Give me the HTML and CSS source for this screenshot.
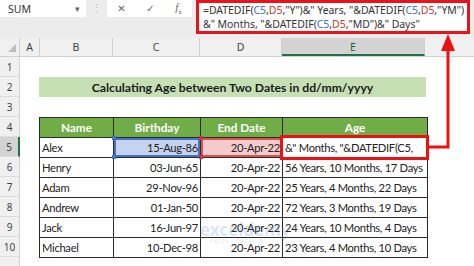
FILE: index.html
```html
<!DOCTYPE html>
<html lang="en">
<head>
    <meta charset="UTF-8">
    <title>DATEDIF Age</title>
    <link rel="stylesheet" href="styles.css">
</head>
<body>

    <div class="formula-bar">
        <div class="name-box"><span>SUM</span><span class="caret">&#9662;</span></div>
        <div class="grip">&#8942;</div>
        <div class="fx-buttons">
            <span class="btn">&#10005;</span>
            <span class="btn">&#10003;</span>
            <span class="btn fx"><i>f</i><sub>x</sub></span>
        </div>
        <div class="formula">
            =DATEDIF(<span class="ref-b">C5</span>,<span class="ref-r">D5</span>,"Y")&amp;" Years, "&amp;DATEDIF(<span class="ref-b">C5</span>,<span class="ref-r">D5</span>,"YM")<br>
            &amp;" Months, "&amp;DATEDIF(<span class="ref-b">C5</span>,<span class="ref-r">D5</span>,"MD")&amp;" Days"
        </div>
    </div>

    <div class="col-headers">
        <div class="corner"><span class="tri"></span></div>
        <div class="ch w-a">A</div>
        <div class="ch w-b">B</div>
        <div class="ch w-c">C</div>
        <div class="ch w-d">D</div>
        <div class="ch w-e active">E</div>
        <div class="ch rest"></div>
    </div>

    <div class="sheet-body">
        <div class="row-headers">
            <div class="rh">1</div>
            <div class="rh">2</div>
            <div class="rh">3</div>
            <div class="rh">4</div>
            <div class="rh active">5</div>
            <div class="rh">6</div>
            <div class="rh">7</div>
            <div class="rh">8</div>
            <div class="rh">9</div>
            <div class="rh">10</div>
            <div class="rh"></div>
        </div>

        <div class="cells">
            <div class="spacer"></div>
            <div class="title">Calculating Age between Two Dates in dd/mm/yyyy</div>
            <div class="spacer"></div>

            <table class="age-table">
                <colgroup>
                    <col class="c-name"><col class="c-birth"><col class="c-end"><col class="c-age">
                </colgroup>
                <tr>
                    <th>Name</th><th>Birthday</th><th>End Date</th><th>Age</th>
                </tr>
                <tr>
                    <td>Alex</td>
                    <td class="num sel-blue">15-Aug-86</td>
                    <td class="num sel-red">20-Apr-22</td>
                    <td class="callout">&amp;" Months, "&amp;DATEDIF(C5,</td>
                </tr>
                <tr><td>Henry</td><td class="num">03-Jun-65</td><td class="num">20-Apr-22</td><td>56 Years, 10 Months, 17 Days</td></tr>
                <tr><td>Adam</td><td class="num">29-Nov-96</td><td class="num">20-Apr-22</td><td>25 Years, 4 Months, 22 Days</td></tr>
                <tr><td>Andrew</td><td class="num">01-Jan-50</td><td class="num">20-Apr-22</td><td>72 Years, 3 Months, 19 Days</td></tr>
                <tr><td>Jack</td><td class="num">16-Jun-97</td><td class="num">20-Apr-22</td><td>24 Years, 10 Months, 4 Days</td></tr>
                <tr><td>Michael</td><td class="num">10-Dec-98</td><td class="num">20-Apr-22</td><td>23 Years, 4 Months, 10 Days</td></tr>
            </table>
        </div>
    </div>

    <!-- watermark -->
    <div class="watermark">
        <span class="wm-name">exceldemy</span>
        <span class="wm-sub">EXCEL · DATA · BI</span>
    </div>

    <!-- callout arrow from the cell up to the formula bar -->
    <svg class="arrow" width="474" height="266" viewBox="0 0 474 266">
        <polyline points="426,147 448,147 448,48" fill="none" stroke="#ee1111" stroke-width="3"/>
        <polygon points="441,51 455,51 448,34" fill="#ee1111"/>
    </svg>

</body>
</html>
```

FILE: styles.css
```css
body {
    margin: 0;
    width: 474px;
    height: 266px;
    overflow: hidden;
    position: relative;
    background-color: #fff;
    font-family: 'Lato', 'Liberation Sans', sans-serif;
    color: #222;
}

/* formula bar */
.formula-bar {
    display: flex;
    align-items: flex-start;
    height: 38px;
    background-color: #ececec;
}

.name-box {
    width: 86px;
    height: 17px;
    box-sizing: border-box;
    background-color: #fff;
    display: flex;
    align-items: center;
    justify-content: space-between;
    padding: 0 6px 0 8px;
    font-family: 'Noto Sans', sans-serif;
    font-size: 10.5px;
    color: #333;
}

.caret {
    font-size: 9px;
    color: #666;
}

.grip {
    width: 21px;
    text-align: center;
    color: #b5b5b5;
    font-size: 11px;
    line-height: 15px;
}

.fx-buttons {
    width: 85px;
    height: 17px;
    background-color: #fff;
    display: flex;
    align-items: center;
    justify-content: space-around;
    color: #666;
    font-family: 'DejaVu Sans', sans-serif;
    font-size: 10px;
}

.fx {
    font-family: 'Liberation Serif', serif;
    font-size: 11px;
}

.fx sub {
    font-size: 7px;
}

.formula {
    margin-left: 4px;
    width: 274px;
    height: 34px;
    box-sizing: border-box;
    border: 3px solid #e8141b;
    background-color: #fff;
    padding: 0 4px;
    font-family: 'Noto Sans', sans-serif;
    font-size: 10.5px;
    letter-spacing: -0.05px;
    line-height: 14px;
    color: #333;
    white-space: nowrap;
}

.ref-b { color: #3a6fc4; }
.ref-r { color: #c0392b; }

/* column headers */
.col-headers {
    display: flex;
    height: 19px;
    background-color: #f0f0f0;
    border-bottom: 1px solid #d0d0d0;
    box-sizing: border-box;
}

.corner {
    width: 20px;
    border-right: 1px solid #d0d0d0;
    box-sizing: border-box;
    position: relative;
}

.tri {
    position: absolute;
    right: 3px;
    bottom: 4px;
    width: 0;
    height: 0;
    border-left: 8px solid transparent;
    border-bottom: 8px solid #bdbdbd;
}

.ch {
    box-sizing: border-box;
    border-right: 1px solid #d0d0d0;
    text-align: center;
    font-family: 'Noto Sans', sans-serif;
    font-size: 10.5px;
    line-height: 18px;
    color: #444;
}

.ch.active {
    background-color: #d3d3d3;
    border-bottom: 2px solid #217346;
    color: #1e5e38;
}

.w-a { width: 20px; }
.w-b { width: 73px; }
.w-c { width: 87px; }
.w-d { width: 82px; }
.w-e { width: 143px; }
.rest { flex: 1; border-right: none; }

/* sheet body */
.sheet-body {
    display: flex;
}

.row-headers {
    width: 20px;
    background-color: #f0f0f0;
    border-right: 1px solid #d0d0d0;
    box-sizing: border-box;
}

.rh {
    height: 20px;
    box-sizing: border-box;
    border-bottom: 1px solid #dcdcdc;
    text-align: center;
    font-family: 'Noto Sans', sans-serif;
    font-size: 10px;
    line-height: 21px;
    color: #444;
}

.rh.active {
    background-color: #d3d3d3;
    border-right: 2px solid #217346;
    margin-right: -1px;
}

.cells {
    flex: 1;
    padding-left: 19px;
}

.spacer {
    height: 20px;
}

.title {
    width: 387px;
    height: 20px;
    background-color: #c6e0b4;
    text-align: center;
    font-weight: bold;
    font-size: 12.2px;
    line-height: 21px;
    color: #1a1a1a;
}

/* the data table */
.age-table {
    border-collapse: collapse;
    table-layout: fixed;
    width: 388px;
    font-size: 11.2px;
    letter-spacing: -0.3px;
}

.c-name { width: 74px; }
.c-birth { width: 87px; }
.c-end { width: 82px; }
.c-age { width: 145px; }

.age-table th,
.age-table td {
    height: 19px;
    padding: 0 2px;
    border: 1px solid #2a2a2a;
    white-space: nowrap;
    overflow: hidden;
    line-height: 19px;
}

.age-table th {
    background-color: #70ad47;
    color: #fff;
    font-weight: bold;
    font-size: 11.8px;
    text-align: center;
    letter-spacing: 0;
}

.age-table td.num {
    text-align: right;
}

.sel-blue,
.sel-red {
    position: relative;
    overflow: visible !important;
}

.sel-blue {
    background-color: #c5d3ee;
    box-shadow: inset 0 0 0 2px #4472c4;
}

.sel-red {
    background-color: #f4cbcc;
    box-shadow: inset 0 0 0 2px #d9534f;
}

.sel-blue::before,
.sel-blue::after,
.sel-red::before,
.sel-red::after {
    content: "";
    position: absolute;
    width: 4px;
    height: 4px;
}

.sel-blue::before { left: -2px; top: -2px; background-color: #4472c4; }
.sel-blue::after { left: -2px; bottom: -2px; background-color: #4472c4; }
.sel-red::before { left: -2px; top: -2px; background-color: #c8343a; }
.sel-red::after { left: -2px; bottom: -2px; background-color: #c8343a; }

.callout {
    position: relative;
    overflow: visible !important;
}

.callout::after {
    content: "";
    position: absolute;
    left: -3px;
    top: -3px;
    right: -2px;
    bottom: -3px;
    border: 3px solid #ee1111;
}

/* overlays */
.watermark {
    position: absolute;
    left: 186px;
    top: 221px;
    display: flex;
    flex-direction: column;
    align-items: center;
    opacity: 0.18;
    color: #4a6fb5;
    pointer-events: none;
}

.wm-name {
    font-family: 'Noto Sans', sans-serif;
    font-weight: bold;
    font-size: 17px;
    line-height: 17px;
    padding-left: 14px;
}

.wm-sub {
    font-family: 'Noto Sans', sans-serif;
    font-size: 5px;
    letter-spacing: 1px;
}

.arrow {
    position: absolute;
    left: 0;
    top: 0;
    pointer-events: none;
}
```
